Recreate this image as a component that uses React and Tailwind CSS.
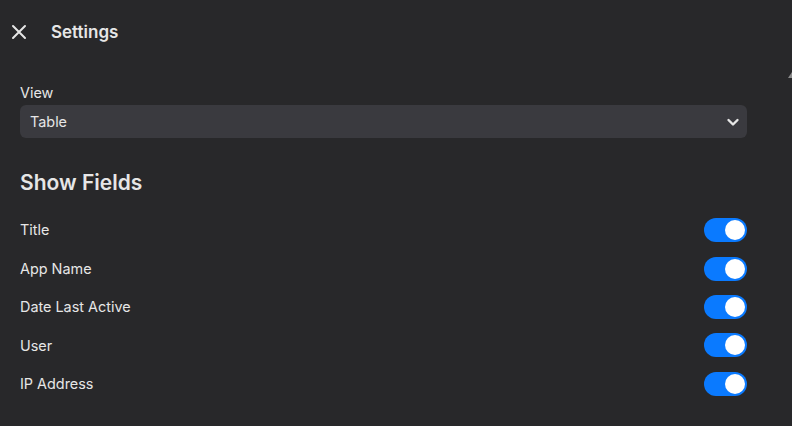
import React, { useState } from 'react';

const FIELDS = ['Title', 'App Name', 'Date Last Active', 'User', 'IP Address'];

function Toggle({ on, onChange }) {
  return (
    <button
      onClick={onChange}
      className={`relative w-[43px] h-[24px] rounded-full flex items-center px-[2px] ${on ? 'bg-[#0a7aff] justify-end' : 'bg-[#4a4a4e] justify-start'}`}
    >
      <span className="block w-[20px] h-[20px] rounded-full bg-white" />
    </button>
  );
}

export default function App() {
  const [shown, setShown] = useState(FIELDS.map(() => true));

  return (
    <div className="relative w-[792px] h-[426px] overflow-hidden bg-[#28282a] text-[#e6e6e6] font-['Inter',sans-serif]">
      {/* Header */}
      <header className="h-[64px] flex items-center">
        <svg className="ml-[11px] w-[16px] h-[16px]" viewBox="0 0 16 16" fill="none" stroke="#e6e6e6" strokeWidth="2" strokeLinecap="round">
          <path d="M2 2L14 14M14 2L2 14" />
        </svg>
        <h1 className="ml-[24px] pt-[2px] text-[17px] font-semibold">Settings</h1>
      </header>

      {/* scrollbar arrow hint */}
      <div className="absolute right-0 top-[72px] w-0 h-0 border-l-[4px] border-l-transparent border-b-[6px] border-b-[#8a8a8a]" />

      <main className="ml-5 w-[727px]">
        <label className="block mt-[20px] text-[14.4px] leading-[18px]">View</label>
        <button className="mt-[3px] w-full h-[33px] rounded-md bg-[#3a3a3f] flex items-center justify-between pl-[10px] pr-[7px] text-[14.4px]">
          <span>Table</span>
          <svg className="w-[14px] h-[14px]" viewBox="0 0 14 14" fill="none" stroke="#e6e6e6" strokeWidth="2.4" strokeLinecap="round" strokeLinejoin="round">
            <path d="M2.5 5L7 9.5L11.5 5" />
          </svg>
        </button>

        <h2 className="mt-[32px] text-[21px] font-semibold leading-[26px]">Show Fields</h2>

        <div className="mt-[15px] flex flex-col">
          {FIELDS.map((f, i) => (
            <div key={f} className="h-[38.4px] flex items-center justify-between">
              <span className="text-[14.4px]">{f}</span>
              <Toggle
                on={shown[i]}
                onChange={() => setShown(s => s.map((v, j) => (j === i ? !v : v)))}
              />
            </div>
          ))}
        </div>
      </main>
    </div>
  );
}
